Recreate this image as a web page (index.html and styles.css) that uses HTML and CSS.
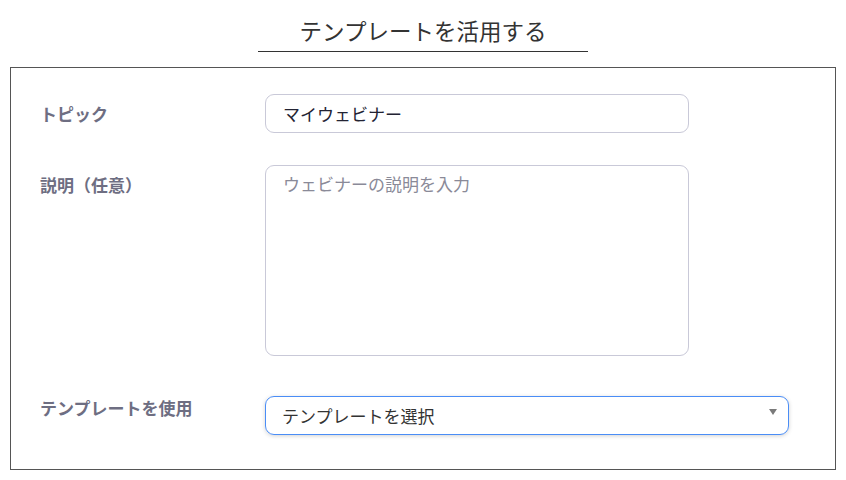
FILE: index.html
```html
<!DOCTYPE html>
<html lang="ja">
<head>
<meta charset="utf-8">
<link rel="stylesheet" href="styles.css">
</head>
<body>
<div class="page">
  <div class="header"><h1 class="title">テンプレートを活用する</h1></div>
  <div class="panel">
    <div class="label">トピック</div>
    <div class="field input">マイウェビナー</div>
    <div class="label">説明（任意）</div>
    <div class="field textarea">ウェビナーの説明を入力</div>
    <div class="label">テンプレートを使用</div>
    <div class="field select">
      <span>テンプレートを選択</span>
      <svg class="arrow" width="8" height="6" viewBox="0 0 8 6"><path d="M0 0 H8 L4 6 Z" fill="#7a7a7a"/></svg>
    </div>
  </div>
</div>
</body>
</html>
```
FILE: styles.css
```css
html, body {
  margin: 0;
  padding: 0;
  background: #fff;
}
body {
  font-family: "Noto Sans CJK JP", "Noto Sans", sans-serif;
  color: #232333;
}
.page {
  width: 846px;
  height: 480px;
  overflow: hidden;
}
.header {
  display: flex;
  justify-content: center;
  padding-top: 15px;
}
.title {
  margin: 0;
  width: 330px;
  text-align: center;
  font-size: 22.5px;
  font-weight: 400;
  line-height: 30px;
  color: #333;
  padding-bottom: 6px;
  border-bottom: 1px solid #333;
}
.panel {
  margin: 15px 10px 0;
  border: 1px solid #555;
  padding: 26px 0 34px 29px;
  display: grid;
  grid-template-columns: 225px 1fr;
  row-gap: 32px;
}
.label {
  font-size: 17px;
  font-weight: 700;
  color: #6e6e82;
  line-height: 24px;
  padding-top: 8px;
}
.field {
  box-sizing: border-box;
  border: 1px solid #c9c9d8;
  border-radius: 9px;
  font-size: 17px;
  line-height: 24px;
  padding: 7px 17px;
}
.input {
  width: 424px;
  height: 39px;
}
.textarea {
  width: 424px;
  height: 191px;
  color: #8a8a98;
  padding-top: 6px;
}
.select {
  margin-top: 8px;
  width: 524px;
  height: 39px;
  border-color: #4a8df6;
  box-shadow: 0 1px 4px rgba(0, 0, 0, 0.18);
  display: flex;
  align-items: center;
  justify-content: space-between;
  padding: 0 11px 0 16px;
  color: #333;
}
.arrow {
  margin-top: -8px;
}
```
